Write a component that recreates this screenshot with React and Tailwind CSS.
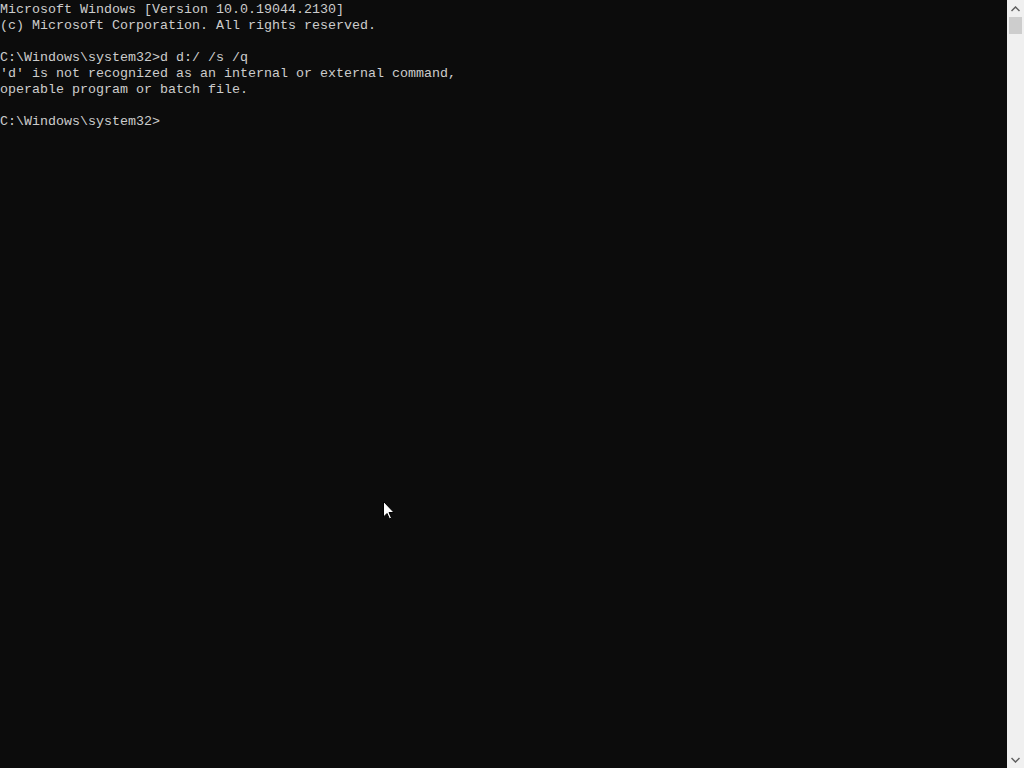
import React from "react";

const lines = [
  "Microsoft Windows [Version 10.0.19044.2130]",
  "(c) Microsoft Corporation. All rights reserved.",
  "",
  "C:\\Windows\\system32>d d:/ /s /q",
  "'d' is not recognized as an internal or external command,",
  "operable program or batch file.",
  "",
  "C:\\Windows\\system32>",
];

export default function App() {
  return (
    <div className="relative flex h-[768px] w-[1024px] overflow-hidden bg-[#0c0c0c]">
      <div
        className="flex-1 whitespace-pre pt-[2px] text-[13.33px] leading-[16px] text-[#cccccc]"
        style={{ fontFamily: '"Liberation Mono", "DejaVu Sans Mono", monospace' }}
      >
        {lines.map((l, i) => (
          <div key={i} className="h-[16px]">
            {l}
          </div>
        ))}
      </div>
      <div className="flex w-[17px] flex-col bg-[#f0f0f0]">
        <div className="flex h-[17px] items-center justify-center">
          <svg width="9" height="6" viewBox="0 0 9 6">
            <path d="M0.5 5 L4.5 1 L8.5 5" fill="none" stroke="#606060" strokeWidth="1.5" />
          </svg>
        </div>
        <div className="mx-[2px] h-[17px] bg-[#cdcdcd]" />
        <div className="flex-1" />
        <div className="flex h-[17px] items-center justify-center">
          <svg width="9" height="6" viewBox="0 0 9 6">
            <path d="M0.5 1 L4.5 5 L8.5 1" fill="none" stroke="#606060" strokeWidth="1.5" />
          </svg>
        </div>
      </div>
      <svg
        className="absolute left-[383px] top-[501px]"
        width="12"
        height="19"
        viewBox="0 0 12 19"
      >
        <path
          d="M0.5 0.5 L0.5 16 L4 12.5 L6.5 18 L8.5 17 L6 11.5 L11 11.5 Z"
          fill="#ffffff"
          stroke="#000000"
          strokeWidth="1"
        />
      </svg>
    </div>
  );
}
